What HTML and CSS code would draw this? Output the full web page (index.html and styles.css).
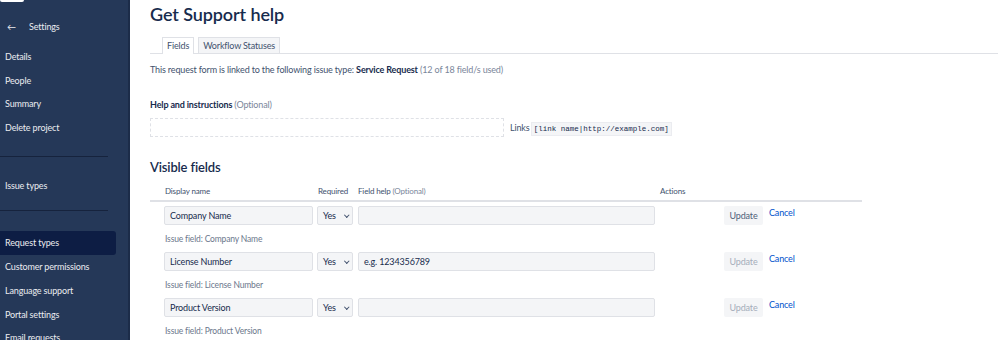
FILE: index.html
```html
<!DOCTYPE html>
<html lang="en">
<head>
    <meta charset="UTF-8">
    <title>Get Support help</title>
    <link rel="stylesheet" href="styles.css">
</head>
<body>
<div class="page">
    <nav class="sidebar">
        <div class="logo-stub"></div>
        <div class="back">
            <span class="arrow">&#8592;</span>
            <span>Settings</span>
        </div>
        <ul class="nav-group">
            <li>Details</li>
            <li>People</li>
            <li>Summary</li>
            <li>Delete project</li>
        </ul>
        <hr class="nav-sep">
        <ul class="nav-group single">
            <li>Issue types</li>
        </ul>
        <hr class="nav-sep">
        <ul class="nav-group last">
            <li class="active">Request types</li>
            <li>Customer permissions</li>
            <li>Language support</li>
            <li>Portal settings</li>
            <li>Email requests</li>
        </ul>
    </nav>

    <main class="content">
        <h1>Get Support help</h1>

        <div class="tabs">
            <span class="tab active">Fields</span>
            <span class="tab">Workflow Statuses</span>
        </div>

        <p class="linked">This request form is linked to the following issue type: <b>Service Request</b> <span class="muted">(12 of 18 field/s used)</span></p>

        <div class="help">
            <div class="label"><b>Help and instructions</b> <span class="muted">(Optional)</span></div>
            <div class="help-row">
                <div class="dashed-box"></div>
                <span class="links">Links <code>[link name|http://example.com]</code></span>
            </div>
        </div>

        <h2>Visible fields</h2>

        <div class="fields">
            <div class="fields-head">
                <span class="col-name">Display name</span>
                <span class="col-req">Required</span>
                <span class="col-help">Field help <span class="muted">(Optional)</span></span>
                <span class="col-act">Actions</span>
            </div>

            <div class="field">
                <div class="field-row">
                    <span class="grip"></span>
                    <div class="input col-name">Company Name</div>
                    <div class="select col-req">Yes <span class="caret"></span></div>
                    <div class="input col-help"></div>
                    <span class="btn">Update</span>
                    <a class="cancel">Cancel</a>
                </div>
                <div class="issue-field">Issue field: Company Name</div>
            </div>

            <div class="field">
                <div class="field-row">
                    <span class="grip"></span>
                    <div class="input col-name">License Number</div>
                    <div class="select col-req">Yes <span class="caret"></span></div>
                    <div class="input col-help">e.g. 1234356789</div>
                    <span class="btn disabled">Update</span>
                    <a class="cancel">Cancel</a>
                </div>
                <div class="issue-field">Issue field: License Number</div>
            </div>

            <div class="field">
                <div class="field-row">
                    <span class="grip"></span>
                    <div class="input col-name">Product Version</div>
                    <div class="select col-req">Yes <span class="caret"></span></div>
                    <div class="input col-help"></div>
                    <span class="btn disabled">Update</span>
                    <a class="cancel">Cancel</a>
                </div>
                <div class="issue-field">Issue field: Product Version</div>
            </div>
        </div>
    </main>
</div>
</body>
</html>
```

FILE: styles.css
```css
body {
    margin: 0;
    font-family: Lato, "Noto Sans", sans-serif;
    font-size: 9px;
    letter-spacing: -0.15px;
    color: #172b4d;
    background: #ffffff;
    overflow: hidden;
}

.page {
    display: flex;
    height: 340px;
}

/* Sidebar */
.sidebar {
    width: 128px;
    flex: none;
    background-color: #253858;
    border-right: 2px solid #1c2c49;
    color: #ebecf0;
    position: relative;
}

.logo-stub {
    position: absolute;
    top: 0;
    left: 0;
    width: 24px;
    height: 2px;
    background: #ffffff;
    border-radius: 0 0 2px 2px;
}

.back {
    display: flex;
    align-items: center;
    height: 16px;
    padding: 18px 0 0 7px;
}

.back .arrow {
    width: 22px;
}

.nav-group {
    list-style: none;
    margin: 0;
    padding: 0;
}

.nav-group li {
    height: 23.7px;
    line-height: 23.7px;
    padding-left: 5px;
}

.sidebar > .nav-group:first-of-type {
    margin-top: 11px;
}

.nav-sep {
    width: 108px;
    margin: 0;
    border: none;
    border-top: 1px solid #16233d;
}

.nav-group:nth-of-type(1) {
    margin-bottom: 16px;
}

.nav-group.single {
    margin: 17px 0 13px;
}

.nav-group.last {
    margin-top: 20px;
}

.nav-group li.active {
    width: 111px;
    background-color: #0d1d44;
    border-radius: 0 3px 3px 0;
}

/* Content */
.content {
    flex: 1;
    padding-left: 20px;
}

h1 {
    margin: 3px 0 0;
    font-size: 18px;
    font-weight: 600;
    line-height: 22px;
    letter-spacing: -0.1px;
}

.tabs {
    display: flex;
    align-items: flex-end;
    margin-top: 12px;
    padding-left: 12px;
    border-bottom: 1px solid #dfe1e6;
    height: 16px;
}

.tab {
    height: 15px;
    line-height: 15px;
    padding: 0 4px;
    background: #f4f5f7;
    border: 1px solid #dfe1e6;
    border-bottom: none;
    margin-right: 4px;
    color: #42526e;
}

.tab.active {
    background: #ffffff;
    height: 16px;
    margin-bottom: -1px;
}

.linked {
    margin: 9px 0 0;
    line-height: 13px;
    color: #42526e;
}

.linked b {
    color: #172b4d;
}

.muted {
    color: #7a869a;
    font-weight: normal;
}

.help {
    margin-top: 22px;
}

.label {
    line-height: 13px;
}

.help-row {
    display: flex;
    align-items: center;
    margin-top: 7px;
}

.dashed-box {
    width: 352px;
    height: 17px;
    border: 1px dashed #dfe1e6;
}

.links {
    margin-left: 6px;
    color: #42526e;
    word-spacing: -1px;
}

.links code {
    font-family: "Liberation Mono", "DejaVu Sans Mono", monospace;
    font-size: 7.5px;
    letter-spacing: 0;
    word-spacing: 0;
    padding: 2px 2px;
    background: #f4f5f7;
    border: 1px solid #ebecf0;
    color: #172b4d;
}

h2 {
    margin: 21px 0 0;
    font-size: 13px;
    font-weight: 600;
    line-height: 18px;
}

/* Fields table */
.fields {
    width: 712px;
    margin-top: 9px;
}

.fields-head {
    display: flex;
    font-size: 8px;
    line-height: 12px;
    color: #42526e;
    padding-bottom: 3px;
    border-bottom: 2px solid #dfe1e6;
}

.fields-head .col-name {
    width: 153px;
    padding-left: 15px;
}

.fields-head .col-req {
    width: 40px;
}

.fields-head .col-help {
    width: 302px;
}

.field {
    padding-top: 4px;
    height: 42px;
}

.field-row {
    display: flex;
    align-items: flex-start;
    height: 19px;
}

.grip {
    width: 4px;
    height: 12px;
    margin: 0 0 0 5px;
    background-image: radial-gradient(#c1c7d0 0.6px, transparent 0.7px);
    background-size: 2px 2px;
}

.input {
    box-sizing: border-box;
    height: 19px;
    line-height: 17px;
    padding: 0 5px;
    background: #f4f5f7;
    border: 1px solid #dfe1e6;
    border-radius: 2px;
    color: #172b4d;
}

.input.col-name {
    width: 149px;
    margin-left: 5px;
}

.select {
    box-sizing: border-box;
    width: 36px;
    height: 19px;
    line-height: 17px;
    margin-left: 4px;
    padding-left: 5px;
    background: #f4f5f7;
    border: 1px solid #dfe1e6;
    border-radius: 2px;
    display: flex;
    align-items: center;
}

.caret {
    width: 2.5px;
    height: 2.5px;
    margin: -2px 0 0 9px;
    border-right: 1.5px solid #42526e;
    border-bottom: 1.5px solid #42526e;
    transform: rotate(45deg);
}

.input.col-help {
    width: 297px;
    margin-left: 5px;
}

.btn {
    box-sizing: border-box;
    width: 39px;
    height: 19px;
    line-height: 19px;
    margin-left: 69px;
    text-align: center;
    background: #f4f5f7;
    border-radius: 2px;
    color: #505f79;
}

.btn.disabled {
    color: #a5adba;
}

.cancel {
    margin-left: 6px;
    margin-top: 1px;
    line-height: 12px;
    color: #0052cc;
}

.issue-field {
    margin: 8px 0 0 15px;
    font-size: 8.5px;
    line-height: 12px;
    color: #6b778c;
}
```
